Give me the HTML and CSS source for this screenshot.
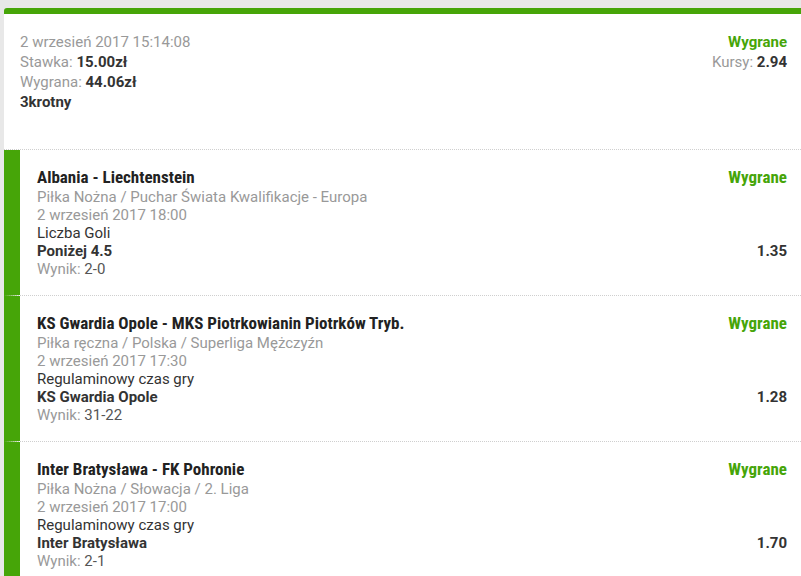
FILE: index.html
```html
<!DOCTYPE html>
<html lang="pl">
<head>
<meta charset="UTF-8" />
<meta name="viewport" content="width=device-width, initial-scale=1" />
<title>Kupon</title>
<link rel="stylesheet" href="styles.css">
</head>
<body>
<div class="coupon">
  <div class="summary">
    <div class="summary-info">
      <div class="muted">2 wrzesień 2017 15:14:08</div>
      <div><span class="muted">Stawka:</span> <b>15.00zł</b></div>
      <div><span class="muted">Wygrana:</span> <b>44.06zł</b></div>
      <div><b>3krotny</b></div>
    </div>
    <div class="summary-side">
      <div class="status">Wygrane</div>
      <div><span class="muted">Kursy:</span> <b>2.94</b></div>
    </div>
  </div>

  <div class="match">
    <div class="match-head">
      <span class="match-title">Albania - Liechtenstein</span>
      <span class="match-status">Wygrane</span>
    </div>
    <div class="muted">Piłka Nożna / Puchar Świata Kwalifikacje - Europa</div>
    <div class="muted">2 wrzesień 2017 18:00</div>
    <div>Liczba Goli</div>
    <div class="pick"><b>Poniżej 4.5</b><b>1.35</b></div>
    <div><span class="muted">Wynik:</span> <span class="score">2-0</span></div>
  </div>

  <div class="match">
    <div class="match-head">
      <span class="match-title">KS Gwardia Opole - MKS Piotrkowianin Piotrków Tryb.</span>
      <span class="match-status">Wygrane</span>
    </div>
    <div class="muted">Piłka ręczna / Polska / Superliga Mężczyźn</div>
    <div class="muted">2 wrzesień 2017 17:30</div>
    <div>Regulaminowy czas gry</div>
    <div class="pick"><b>KS Gwardia Opole</b><b>1.28</b></div>
    <div><span class="muted">Wynik:</span> <span class="score">31-22</span></div>
  </div>

  <div class="match">
    <div class="match-head">
      <span class="match-title">Inter Bratysława - FK Pohronie</span>
      <span class="match-status">Wygrane</span>
    </div>
    <div class="muted">Piłka Nożna / Słowacja / 2. Liga</div>
    <div class="muted">2 wrzesień 2017 17:00</div>
    <div>Regulaminowy czas gry</div>
    <div class="pick"><b>Inter Bratysława</b><b>1.70</b></div>
    <div><span class="muted">Wynik:</span> <span class="score">2-1</span></div>
  </div>
</div>
</body>
</html>
```

FILE: styles.css
```css
* {
  box-sizing: border-box;
}
body {
  margin: 0;
  padding: 8px 0 0 4px;
  background: #e8e8e8;
  font-family: Roboto, 'Liberation Sans', sans-serif;
  font-size: 15px;
  line-height: 20px;
  color: #333;
  overflow: hidden;
}
b {
  font-weight: 700;
}
.muted {
  color: #999;
}
.coupon {
  width: 797px;
  background: #fff;
  border-top: 6px solid #46a508;
  border-top-left-radius: 3px;
}

/* Summary */
.summary {
  display: flex;
  justify-content: space-between;
  padding: 18px 14px 37px 16px;
  border-bottom: 1px dotted #cfcfcf;
}
.summary-side {
  text-align: right;
}
.status {
  color: #46a508;
  font-weight: 700;
}

/* Match rows */
.match {
  border-left: 16px solid #46a508;
  padding: 17px 14px 17px 17px;
  line-height: 18px;
}
.match + .match {
  border-top: 1px dotted #cfcfcf;
}
.match-head {
  display: flex;
  justify-content: space-between;
  line-height: 20px;
  margin-bottom: 1px;
}
.match-title,
.match-status {
  font-size: 17px;
  font-weight: 700;
  font-stretch: 80%;
  color: #222;
}
.match-status {
  color: #46a508;
}
.pick {
  display: flex;
  justify-content: space-between;
}
.score {
  color: #555;
}
```
